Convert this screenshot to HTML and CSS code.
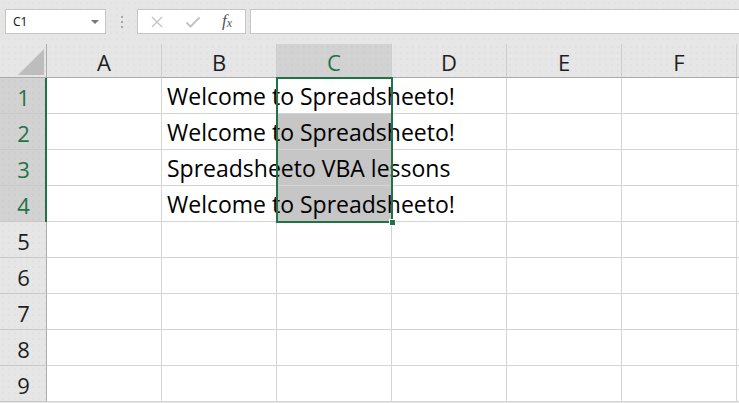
FILE: index.html
```html
<!DOCTYPE html>
<html>
<head>
<meta charset="utf-8">
<link rel="stylesheet" href="styles.css">
</head>
<body>
<div class="app">
  <div class="toolbar">
    <div class="namebox"><span class="nb-text">C1</span><span class="nb-arrow"></span></div>
    <div class="grip"><i></i><i></i><i></i></div>
    <div class="fbuttons">
      <svg class="ico" width="14" height="14" viewBox="0 0 14 14"><path d="M2 2 L12 12 M12 2 L2 12" stroke="#c4c4c4" stroke-width="1.4" fill="none"/></svg>
      <svg class="ico" width="16" height="14" viewBox="0 0 16 14"><path d="M1.5 7.5 L5.5 11.5 L14.5 2.5" stroke="#c4c4c4" stroke-width="2" fill="none"/></svg>
      <span class="fx">f<sub>x</sub></span>
    </div>
    <div class="formula"></div>
  </div>
  <div class="sheet">
    <div class="grid">
      <div class="corner"><svg width="47" height="33" viewBox="0 0 47 33"><polygon points="18,31 44,31 44,5" fill="#bdbdbd"/></svg></div>
      <div class="ch">A</div>
      <div class="ch">B</div>
      <div class="ch sel">C</div>
      <div class="ch">D</div>
      <div class="ch">E</div>
      <div class="ch">F</div>
      <div class="ch fill"></div>

      <div class="rh sel">1</div>
      <div class="c"></div><div class="c"><span class="t">Welcome to Spreadsheeto!</span></div><div class="c"></div><div class="c"></div><div class="c"></div><div class="c"></div><div class="c fill"></div>

      <div class="rh sel">2</div>
      <div class="c"></div><div class="c"><span class="t">Welcome to Spreadsheeto!</span></div><div class="c hl"></div><div class="c"></div><div class="c"></div><div class="c"></div><div class="c fill"></div>

      <div class="rh sel">3</div>
      <div class="c"></div><div class="c"><span class="t">Spreadsheeto VBA lessons</span></div><div class="c hl"></div><div class="c"></div><div class="c"></div><div class="c"></div><div class="c fill"></div>

      <div class="rh sel">4</div>
      <div class="c"></div><div class="c"><span class="t">Welcome to Spreadsheeto!</span></div><div class="c hl"></div><div class="c"></div><div class="c"></div><div class="c"></div><div class="c fill"></div>

      <div class="rh">5</div>
      <div class="c"></div><div class="c"></div><div class="c"></div><div class="c"></div><div class="c"></div><div class="c"></div><div class="c fill"></div>
      <div class="rh">6</div>
      <div class="c"></div><div class="c"></div><div class="c"></div><div class="c"></div><div class="c"></div><div class="c"></div><div class="c fill"></div>
      <div class="rh">7</div>
      <div class="c"></div><div class="c"></div><div class="c"></div><div class="c"></div><div class="c"></div><div class="c"></div><div class="c fill"></div>
      <div class="rh">8</div>
      <div class="c"></div><div class="c"></div><div class="c"></div><div class="c"></div><div class="c"></div><div class="c"></div><div class="c fill"></div>
      <div class="rh">9</div>
      <div class="c"></div><div class="c"></div><div class="c"></div><div class="c"></div><div class="c"></div><div class="c"></div><div class="c fill"></div>
    </div>
    <div class="selection"><span class="handle"></span></div>
    <div class="rowmark"></div>
  </div>
</div>
</body>
</html>
```
FILE: styles.css
```css
* { box-sizing: border-box; }
html, body { margin: 0; padding: 0; }
body {
  width: 739px;
  height: 403px;
  overflow: hidden;
  background: #e6e6e6;
  font-family: "Open Sans", "Noto Sans", sans-serif;
}
.app { width: 739px; }

.toolbar {
  height: 44px;
  display: flex;
  align-items: flex-start;
  padding-top: 9px;
  padding-left: 5px;
  background-color: #e6e6e6;
  background-image: radial-gradient(circle, #dcdcdc 0.6px, transparent 0.8px);
  background-size: 6px 6px;
}
.namebox {
  width: 101px;
  height: 25px;
  background: #fff;
  border: 1px solid #c6c6c6;
  display: flex;
  align-items: center;
  justify-content: space-between;
  padding: 0 6px 0 7px;
}
.nb-text { font-size: 12px; color: #222; font-family: "Noto Sans", sans-serif; }
.nb-arrow {
  width: 0; height: 0;
  border-left: 4px solid transparent;
  border-right: 4px solid transparent;
  border-top: 4px solid #777;
}
.grip {
  width: 31px;
  height: 25px;
  display: flex;
  flex-direction: column;
  align-items: center;
  justify-content: center;
  gap: 3px;
}
.grip i { width: 2px; height: 2px; background: #a8a8a8; display: block; }
.fbuttons {
  width: 109px;
  height: 25px;
  background: #fff;
  border: 1px solid #c6c6c6;
  display: flex;
  align-items: center;
  padding-left: 12px;
}
.fbuttons .ico:nth-child(1) { margin-right: 21px; }
.fbuttons .ico:nth-child(2) { margin-right: 21px; }
.fx {
  font-family: "Liberation Serif", serif;
  font-style: italic;
  font-size: 17px;
  color: #555;
  line-height: 1;
  margin-top: -2px;
}
.fx sub { font-size: 12px; vertical-align: -1px; }
.formula {
  flex: 1;
  height: 25px;
  margin-left: 4px;
  background: #fff;
  border: 1px solid #c6c6c6;
  border-right: none;
}

.sheet { position: relative; }
.grid {
  display: grid;
  grid-template-columns: 47px repeat(6, 115px) 1fr;
  grid-template-rows: 34px repeat(9, 36px);
  background: #fff;
}
.corner, .ch, .rh {
  background-color: #e6e6e6;
  background-image: radial-gradient(circle, #dadada 0.6px, transparent 0.8px);
  background-size: 6px 6px;
  color: #1e1e1e;
  font-size: 22px;
  display: flex;
  align-items: center;
  justify-content: center;
}
.corner { border-right: 1px solid #ababab; border-bottom: 1px solid #ababab; display: block; }
.corner svg { display: block; }
.ch {
  border-right: 1px solid #cdcdcd;
  border-bottom: 1px solid #ababab;
  padding-top: 2px;
}
.ch.fill { border-right: none; }
.rh {
  border-right: 1px solid #ababab;
  border-bottom: 1px solid #c8c8c8;
  padding-top: 2px;
  padding-left: 1px;
}
.ch.sel, .rh.sel {
  background-color: #d2d2d2;
  background-image: radial-gradient(circle, #c8c8c8 0.6px, transparent 0.8px);
  color: #217346;
}
.c {
  border-right: 1px solid #d4d4d4;
  border-bottom: 1px solid #d4d4d4;
  display: flex;
  align-items: flex-end;
  padding: 0 0 1px 5px;
  white-space: nowrap;
  min-width: 0;
}
.c.fill { border-right: none; }
.c.hl { background: #c6c6c6; }
.t {
  position: relative;
  z-index: 1;
  font-size: 23px;
  line-height: 31px;
  color: #000;
}

.selection {
  position: absolute;
  left: 276px;
  top: 33px;
  width: 117px;
  height: 146px;
  border: 2px solid #217346;
  z-index: 2;
}
.handle {
  position: absolute;
  right: -5px;
  bottom: -5px;
  width: 7px;
  height: 7px;
  background: #217346;
  border: 1px solid #fff;
}
.rowmark {
  position: absolute;
  left: 45px;
  top: 34px;
  width: 2px;
  height: 144px;
  background: #217346;
  z-index: 2;
}
```
